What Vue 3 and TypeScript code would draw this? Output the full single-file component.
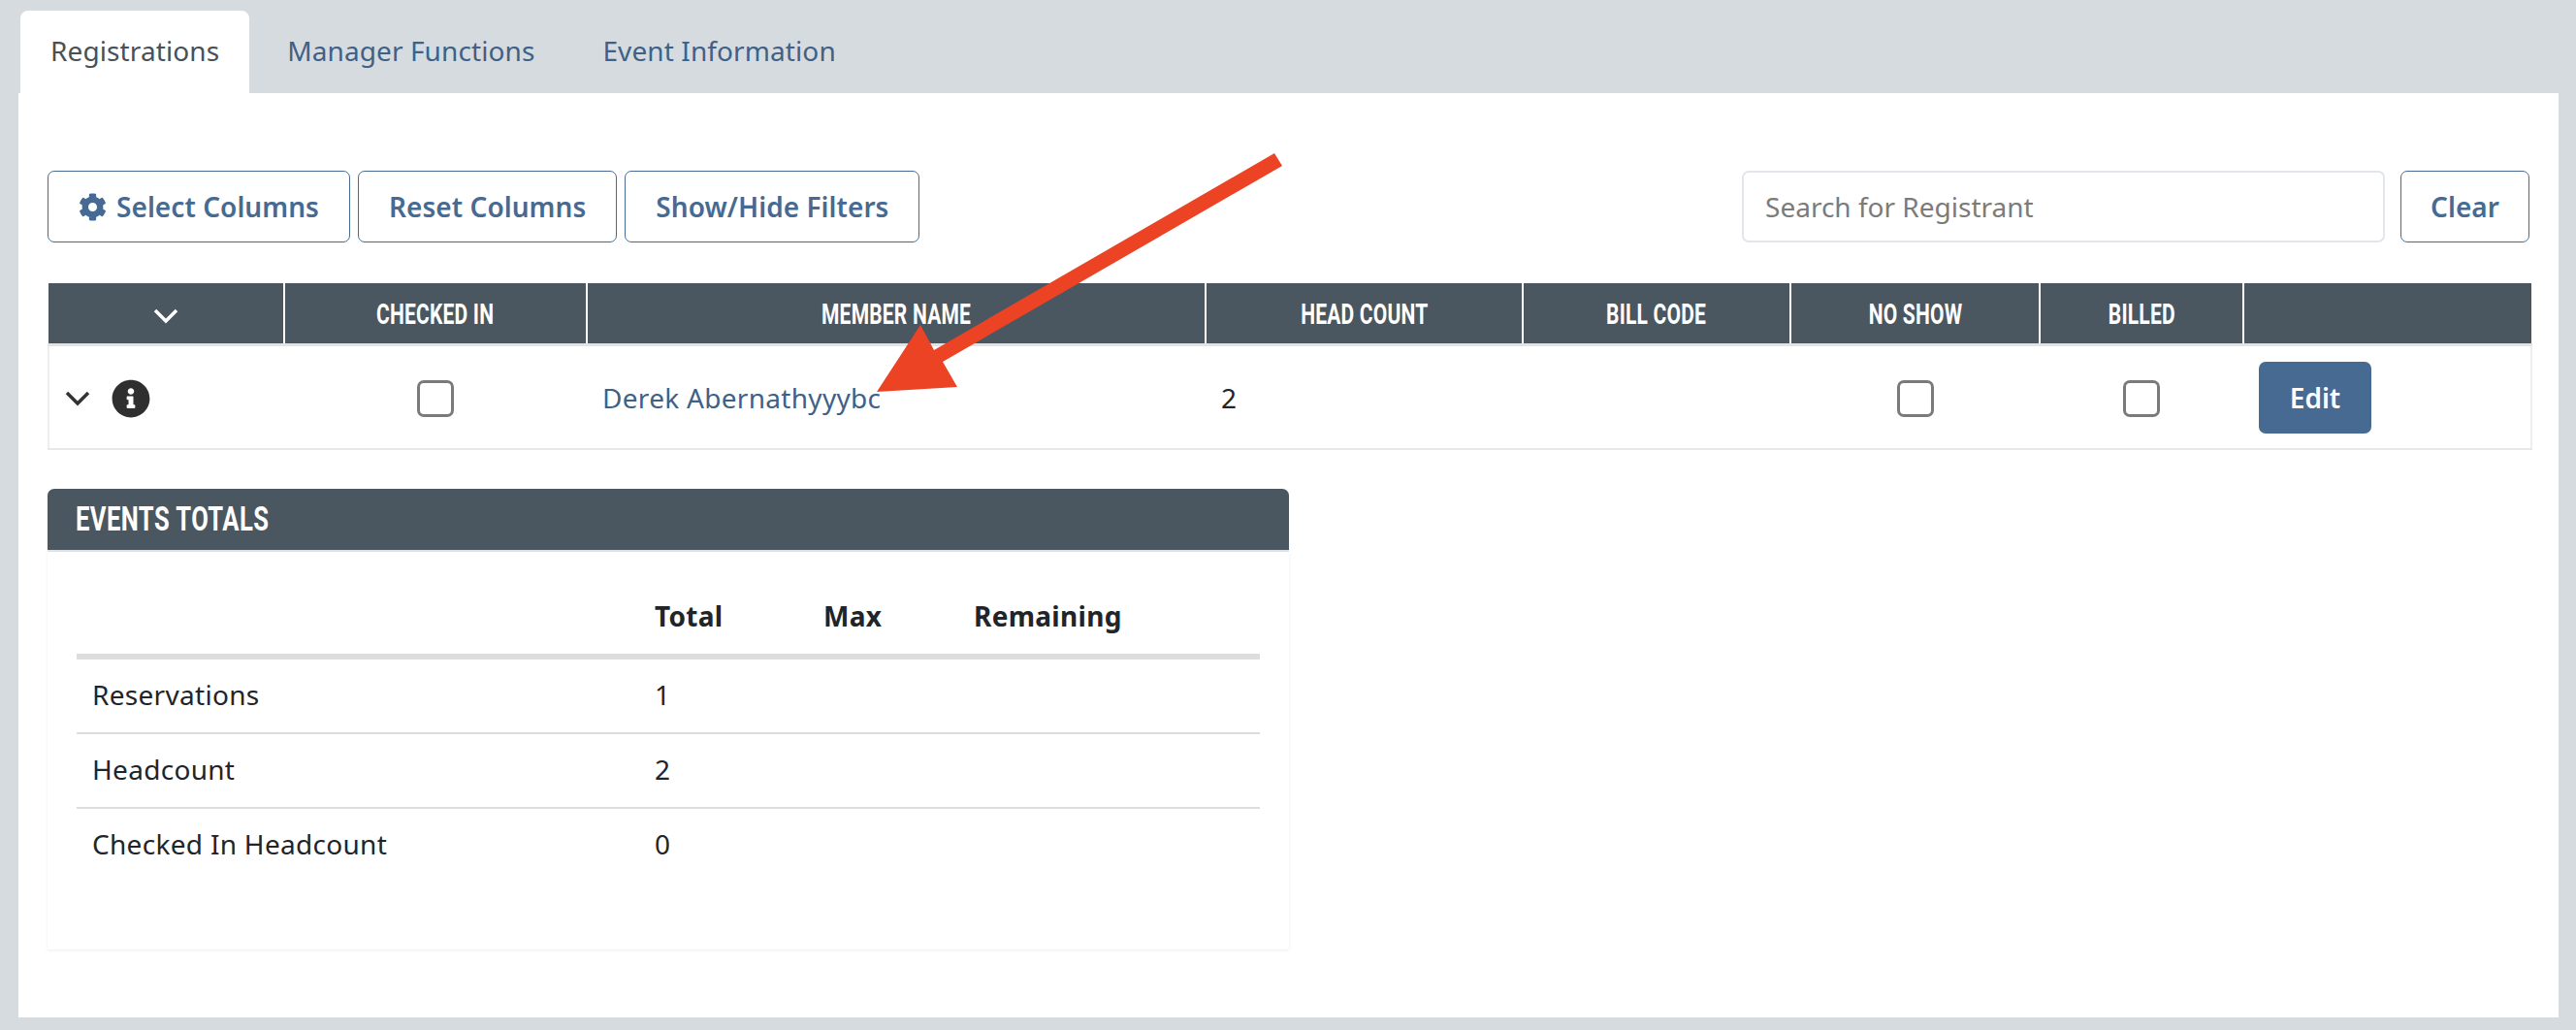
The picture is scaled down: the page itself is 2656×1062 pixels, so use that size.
<script setup lang="ts">
const columns = [
  { label: "", width: 243, chevron: true },
  { label: "CHECKED IN", width: 312 },
  { label: "MEMBER NAME", width: 638 },
  { label: "HEAD COUNT", width: 327 },
  { label: "BILL CODE", width: 276 },
  { label: "NO SHOW", width: 257 },
  { label: "BILLED", width: 210 },
  { label: "", width: 297 },
];

const totals = [
  { name: "Reservations", total: 1 },
  { name: "Headcount", total: 2 },
  { name: "Checked In Headcount", total: 0 },
];
</script>

<template>
  <div class="page">
    <nav class="tabs">
      <a class="tab active">Registrations</a>
      <a class="tab">Manager Functions</a>
      <a class="tab">Event Information</a>
    </nav>

    <main class="panel">
      <div class="toolbar">
        <div class="btn-group">
          <button class="btn">
            <svg class="gear" viewBox="0 0 512 512">
              <path
                d="M487.4 315.7l-42.6-24.6c4.3-23.2 4.3-47 0-70.2l42.6-24.6c4.9-2.8 7.1-8.6 5.5-14-11.1-35.6-30-67.8-54.7-94.6-3.8-4.1-10-5.1-14.8-2.3L380.8 110c-17.9-15.4-38.5-27.3-60.8-35.1V25.8c0-5.6-3.9-10.5-9.4-11.7-36.7-8.2-74.3-7.8-109.2 0-5.5 1.2-9.4 6.1-9.4 11.7V75c-22.2 7.9-42.8 19.8-60.8 35.1L88.7 85.5c-4.9-2.8-11-1.9-14.8 2.3-24.7 26.7-43.6 58.9-54.7 94.6-1.7 5.4.6 11.2 5.5 14L67.3 221c-4.3 23.2-4.3 47 0 70.2l-42.6 24.6c-4.9 2.8-7.1 8.6-5.5 14 11.1 35.6 30 67.8 54.7 94.6 3.8 4.1 10 5.1 14.8 2.3l42.6-24.6c17.9 15.4 38.5 27.3 60.8 35.1v49.2c0 5.6 3.9 10.5 9.4 11.7 36.7 8.2 74.3 7.8 109.2 0 5.5-1.2 9.4-6.1 9.4-11.7v-49.2c22.2-7.9 42.8-19.8 60.8-35.1l42.6 24.6c4.9 2.8 11 1.9 14.8-2.3 24.7-26.7 43.6-58.9 54.7-94.6 1.5-5.5-.7-11.3-5.6-14.1zM256 336c-44.1 0-80-35.9-80-80s35.9-80 80-80 80 35.9 80 80-35.9 80-80 80z"
              />
            </svg>
            Select Columns
          </button>
          <button class="btn">Reset Columns</button>
          <button class="btn">Show/Hide Filters</button>
        </div>
        <div class="search">
          <input class="search-input" placeholder="Search for Registrant" />
          <button class="btn btn-clear">Clear</button>
        </div>
      </div>

      <table class="reg-table">
        <colgroup>
          <col v-for="(col, i) in columns" :key="i" :style="{ width: col.width + 'px' }" />
        </colgroup>
        <thead>
          <tr>
            <th v-for="(col, i) in columns" :key="i">
              <svg v-if="col.chevron" class="chevron head-chevron" viewBox="0 0 26 16">
                <path d="M2 2l11 11L24 2" />
              </svg>
              <span v-else class="narrow">{{ col.label }}</span>
            </th>
          </tr>
        </thead>
        <tbody>
          <tr>
            <td class="expander">
              <svg class="chevron" viewBox="0 0 26 16">
                <path d="M2 2l11 11L24 2" />
              </svg>
              <svg class="info" viewBox="0 0 512 512">
                <path
                  d="M256 8C119 8 8 119.1 8 256c0 137 111 248 248 248s248-111 248-248C504 119.1 393 8 256 8zm0 110c23.2 0 42 18.8 42 42s-18.8 42-42 42-42-18.8-42-42 18.8-42 42-42zm56 254c0 6.6-5.4 12-12 12h-88c-6.6 0-12-5.4-12-12v-24c0-6.6 5.4-12 12-12h12v-64h-12c-6.6 0-12-5.4-12-12v-24c0-6.6 5.4-12 12-12h64c6.6 0 12 5.4 12 12v100h12c6.6 0 12 5.4 12 12v24z"
                />
              </svg>
            </td>
            <td class="center"><span class="check"></span></td>
            <td><a class="link">Derek Abernathyyybc</a></td>
            <td>2</td>
            <td></td>
            <td class="center"><span class="check"></span></td>
            <td class="center"><span class="check"></span></td>
            <td><button class="btn-edit">Edit</button></td>
          </tr>
        </tbody>
      </table>

      <section class="totals">
        <h2 class="totals-title"><span class="title-text">EVENTS TOTALS</span></h2>
        <div class="totals-body">
          <table class="totals-table">
            <thead>
              <tr>
                <th></th>
                <th>Total</th>
                <th>Max</th>
                <th>Remaining</th>
              </tr>
            </thead>
            <tbody>
              <tr v-for="row in totals" :key="row.name">
                <td>{{ row.name }}</td>
                <td>{{ row.total }}</td>
                <td></td>
                <td></td>
              </tr>
            </tbody>
          </table>
        </div>
      </section>
    </main>

    <!-- annotation drawn on top of the screenshot -->
    <svg class="arrow" viewBox="0 0 2656 1062">
      <polygon points="1314,158 1322,171 972,373 987,399 904,404 949,335 963,361" />
    </svg>
  </div>
</template>

<style>
html,
body {
  margin: 0;
  background: #d6dbdf;
}
</style>

<style scoped>
.page {
  position: relative;
  width: 2656px;
  height: 1062px;
  box-sizing: border-box;
  padding: 11px 18px 0 19px;
  font-family: "Noto Sans", "Liberation Sans", sans-serif;
  font-size: 28px;
  letter-spacing: 0.3px;
  color: #212529;
  background: #d6dbdf;
  overflow: hidden;
}
.tabs {
  display: flex;
  gap: 8px;
  height: 85px;
  padding-left: 2px;
}
.tab {
  display: flex;
  align-items: center;
  padding: 0 31px 3px;
  color: #3f6186;
  letter-spacing: 0.1px;
  border-radius: 8px 8px 0 0;
}
.tab.active {
  background: #fff;
  color: #495057;
}
.panel {
  height: 953px;
  box-sizing: border-box;
  padding: 80px 30px 0;
  background: #fff;
}
.toolbar {
  display: flex;
  justify-content: space-between;
}
.btn-group,
.search {
  display: flex;
  gap: 8px;
}
.search {
  gap: 16px;
}
.btn {
  display: flex;
  align-items: center;
  gap: 10px;
  height: 74px;
  padding: 0 31px;
  border: 1px solid #476a92;
  border-radius: 7px;
  background: #fff;
  color: #476a92;
  font: 600 28px "Noto Sans", "Liberation Sans", sans-serif;
  letter-spacing: 0.05px;
}
.btn-clear {
  padding: 0 30px;
}
.gear {
  width: 29px;
  height: 29px;
  fill: #476a92;
}
.search-input {
  width: 663px;
  height: 74px;
  box-sizing: border-box;
  padding: 0 22px;
  border: 2px solid #e2e5ea;
  border-radius: 7px;
  font: 400 28px "Noto Sans", "Liberation Sans", sans-serif;
  color: #212529;
}
.search-input::placeholder {
  color: #7b7b7b;
  opacity: 1;
}
.reg-table {
  width: 2560px;
  margin-top: 42px;
  border-collapse: collapse;
  table-layout: fixed;
}
.reg-table th {
  height: 62px;
  padding: 0;
  background: #4a5660;
  color: #fff;
  font: 700 30px "Roboto", "Liberation Sans", sans-serif;
  border-left: 2px solid #fff;
  border-bottom: 3px solid #e2e3e5;
}
.reg-table th:first-child {
  border-left: 0;
}
.narrow {
  display: inline-block;
  white-space: nowrap;
  transform: scaleX(0.7);
}
.reg-table td {
  height: 105px;
  padding: 0 16px;
  border-bottom: 2px solid #e6e8ea;
}
.reg-table td:first-child {
  border-left: 2px solid #eceef0;
}
.reg-table td:last-child {
  border-right: 2px solid #eceef0;
}
.center {
  text-align: center;
}
.expander {
  white-space: nowrap;
}
.chevron {
  width: 26px;
  height: 16px;
  fill: none;
  stroke: #333;
  stroke-width: 3.5;
  vertical-align: middle;
}
.head-chevron {
  stroke: #fff;
}
.info {
  width: 40px;
  height: 40px;
  margin-left: 22px;
  fill: #2f2f2f;
  vertical-align: middle;
}
.check {
  display: inline-block;
  width: 38px;
  height: 38px;
  box-sizing: border-box;
  border: 3px solid #7a7a7a;
  border-radius: 7px;
  vertical-align: middle;
}
.link {
  color: #3f6186;
}
.btn-edit {
  width: 116px;
  height: 74px;
  border: 0;
  border-radius: 7px;
  background: #476a92;
  color: #fff;
  font: 600 28px "Noto Sans", "Liberation Sans", sans-serif;
}
.totals {
  width: 1280px;
  margin-top: 40px;
}
.totals-title {
  height: 63px;
  margin: 0;
  padding: 0 29px;
  display: flex;
  align-items: center;
  background: #4a5660;
  color: #fff;
  font: 700 35px "Roboto", "Liberation Sans", sans-serif;
  letter-spacing: 0.6px;
  border-radius: 7px 7px 0 0;
  border-bottom: 2px solid #e2e3e5;
}
.title-text {
  display: inline-block;
  white-space: nowrap;
  transform: scaleX(0.73);
  transform-origin: left center;
}
.totals-body {
  height: 410px;
  box-sizing: border-box;
  padding: 30px 30px 0;
  box-shadow: 0 1px 3px rgba(0, 0, 0, 0.08);
}
.totals-table {
  width: 1220px;
  border-collapse: collapse;
  table-layout: fixed;
}
.totals-table th {
  height: 72px;
  padding: 0 0 3px 16px;
  text-align: left;
  font-weight: 700;
  border-bottom: 6px solid #dddddd;
}
.totals-table th:first-child,
.totals-table td:first-child {
  width: 564px;
}
.totals-table th:nth-child(2) {
  width: 158px;
}
.totals-table th:nth-child(3) {
  width: 139px;
}
.totals-table td {
  height: 72px;
  padding: 0 0 3px 16px;
  border-bottom: 2px solid #dddddd;
}
.totals-table tr:last-child td {
  border-bottom: 0;
}
.arrow {
  position: absolute;
  top: 0;
  left: 0;
  width: 2656px;
  height: 1062px;
  pointer-events: none;
}
.arrow polygon {
  fill: #ec4325;
}
</style>
